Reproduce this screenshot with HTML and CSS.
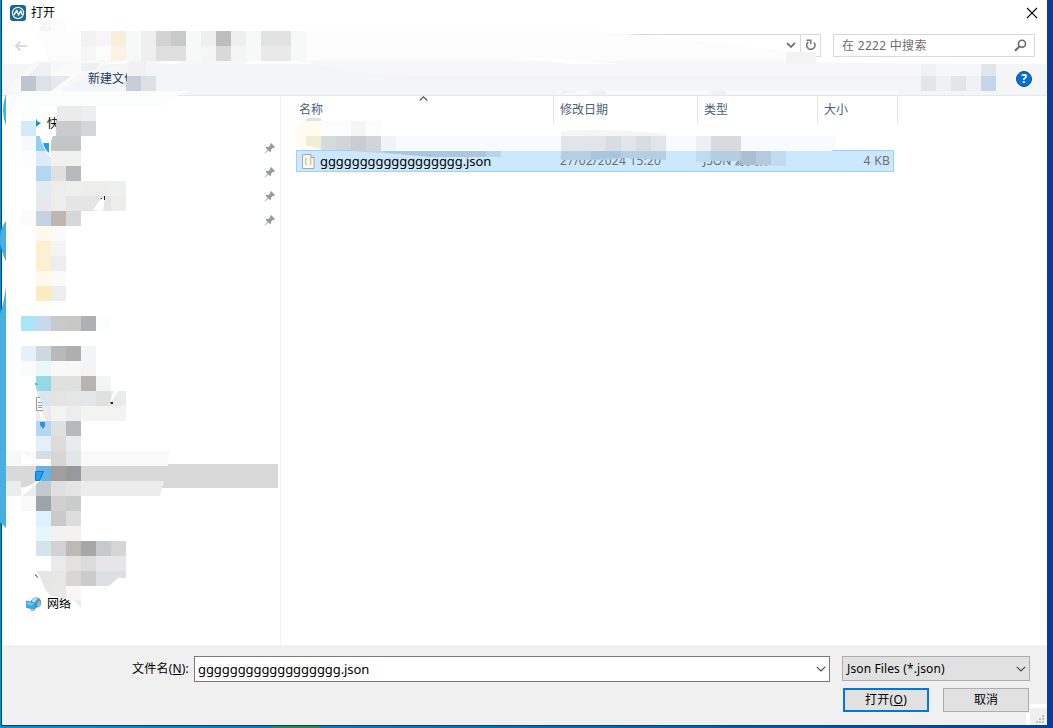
FILE: index.html
```html
<!DOCTYPE html>
<html lang="zh-CN">
<head>
<meta charset="utf-8">
<title>打开</title>
<link rel="stylesheet" href="styles.css">
</head>
<body>
<div class="dialog">
  <header class="titlebar">
    <svg class="app-icon" width="16" height="16" viewBox="0 0 16 16"><rect width="16" height="16" rx="3" fill="#14678f"/><circle cx="8" cy="8" r="5.600" fill="#1b7396" stroke="#e4f1f5" stroke-width="1.200"/><path d="M3.800 10.200 6.800 5.400 8.600 10 10.600 6l1.800 4" fill="none" stroke="#fff" stroke-width="1.500" stroke-linejoin="round"/></svg>
    <span class="title">打开</span>
    <svg class="close" width="12" height="12" viewBox="0 0 12 12"><path d="m1 1 10 10M11 1 1 11" stroke="#000" stroke-width="1.100"/></svg>
  </header>
  <nav class="navbar">
    <svg class="back" width="12" height="12" viewBox="0 0 12 12"><path d="M12 6H1M5.500 1.500 1 6l4.500 4.500" fill="none" stroke="#d4d4d4" stroke-width="1.700"/></svg>
    <div class="address">
      <svg class="addr-arrow" width="10" height="7" viewBox="0 0 10 7"><path d="m1 1 4 4 4-4" fill="none" stroke="#777" stroke-width="1.800"/></svg>
      <span class="refresh"><svg width="12" height="13" viewBox="0 0 12 13"><path d="M3.300 2.800a4.200 4.200 0 1 0 5.700.6" fill="none" stroke="#777" stroke-width="1.600"/><path d="M1.500 1.300h4.200v4" fill="none" stroke="#777" stroke-width="1.500"/></svg></span>
    </div>
    <div class="search"><span>在 2222 中搜索</span>
      <svg width="13" height="13" viewBox="0 0 13 13"><circle cx="8" cy="4.800" r="3.500" fill="none" stroke="#666" stroke-width="1.500"/><path d="M5.500 7.400 1 11.800" stroke="#666" stroke-width="1.900"/></svg>
    </div>
  </nav>
  <div class="toolbar">
    <span class="new-folder">新建文件</span>
    <span class="help">?</span>
  </div>
  <main class="main">
    <aside class="sidebar">
      <div class="side-row"><span class="side-label">快</span></div>
      <div class="side-row"><svg class="pin" width="10" height="10" viewBox="0 0 10 10"><path d="M6 0 10 4 9 5 8 4.700 6 6.700 6 8.500 5 9.300 3.200 7.200.600 10 0 9.400 2.500 6.700.500 4.800 1.500 4h2l2-2L5 1Z" fill="#909ca5"/></svg></div>
      <div class="side-row"><svg class="pin" width="10" height="10" viewBox="0 0 10 10"><path d="M6 0 10 4 9 5 8 4.700 6 6.700 6 8.500 5 9.300 3.200 7.200.600 10 0 9.400 2.500 6.700.500 4.800 1.500 4h2l2-2L5 1Z" fill="#909ca5"/></svg></div>
      <div class="side-row"><svg class="pin" width="10" height="10" viewBox="0 0 10 10"><path d="M6 0 10 4 9 5 8 4.700 6 6.700 6 8.500 5 9.300 3.200 7.200.600 10 0 9.400 2.500 6.700.500 4.800 1.500 4h2l2-2L5 1Z" fill="#909ca5"/></svg></div>
      <div class="side-row"><svg class="pin" width="10" height="10" viewBox="0 0 10 10"><path d="M6 0 10 4 9 5 8 4.700 6 6.700 6 8.500 5 9.300 3.200 7.200.600 10 0 9.400 2.500 6.700.500 4.800 1.500 4h2l2-2L5 1Z" fill="#909ca5"/></svg></div>
      <div class="side-row side-current"></div>
      <div class="side-row side-network">
        <svg class="net-icon" width="16" height="16" viewBox="0 0 16 16"><circle cx="10" cy="6.500" r="5.300" fill="#5595b8"/><path d="M6 3.500q3-3 6-1l-2 2-1 3-3-1z" fill="#b5d9e7"/><path d="m12 5 3 1-1 4-3 1z" fill="#8bbfd4"/><path d="m.500 5 9 2-.500 6.500L.500 11.500z" fill="#36a9f4" stroke="#1c83ca" stroke-width=".600"/><path d="m1 6 8 1.500-4 2L1 9z" fill="#67c6ff"/><path d="m4 13 4 1 1 1H5z" fill="#a7b7bd"/></svg>
        <span class="side-label">网络</span>
      </div>
    </aside>
    <section class="files">
      <div class="columns">
        <div class="col col-name">名称<svg class="sort" width="9" height="5" viewBox="0 0 9 5"><path d="m.700 4.500 3.800-3.700 3.800 3.700" fill="none" stroke="#555" stroke-width="1.100"/></svg></div>
        <div class="col col-date">修改日期</div>
        <div class="col col-type">类型</div>
        <div class="col col-size">大小</div>
      </div>
      <div class="file-row">
        <svg class="file-icon" width="13" height="15" viewBox="0 0 13 15"><path d="M.500.500h8.500l3 3v11h-11.500z" fill="#f7f9f9" stroke="#a4a9aa"/><path d="M9 .500v3h3" fill="#fff" stroke="#8f999d"/><path d="M5 4.500q-1.500 0-1.200 1.500.200 1.500-.800 1.500 1 0 .800 1.500-.300 1.700 1.200 1.700M7.500 4.500q1.500 0 1.200 1.500-.200 1.500.800 1.500-1 0-.800 1.500.300 1.700-1.200 1.700" fill="none" stroke="#c6c961" stroke-width="1.200"/></svg>
        <span class="file-name">gggggggggggggggggg.json</span>
        <span class="file-date">27/02/2024 15:20</span>
        <span class="file-type">JSON 源文件</span>
        <span class="file-size">4 KB</span>
      </div>
    </section>
  </main>
  <footer class="footer">
    <div class="line">
      <label class="label">文件名(<u>N</u>):</label>
      <div class="input"><span>gggggggggggggggggg.json</span><svg width="10" height="6" viewBox="0 0 10 6"><path d="m.800.800 4.200 4.200 4.200-4.200" fill="none" stroke="#444" stroke-width="1.100"/></svg></div>
      <div class="select"><span>Json Files (*.json)</span><svg width="10" height="6" viewBox="0 0 10 6"><path d="m.800.800 4.200 4.200 4.200-4.200" fill="none" stroke="#444" stroke-width="1.100"/></svg></div>
    </div>
    <div class="buttons">
      <div class="button primary">打开(<u>O</u>)</div>
      <div class="button">取消</div>
    </div>
    <svg class="grip" width="21" height="21" viewBox="0 0 21 21"><path fill="#fff" d="M4 0h17v4H4zM0 9h4v12H0z"/><path fill="#bfbfbf" d="M16 11h2v2h-2zM13 14h2v2h-2zM16 14h2v2h-2zM10 17h2v2h-2zM13 17h2v2h-2zM16 17h2v2h-2z"/></svg>
  </footer>
</div>
<svg class="smear" width="1053" height="100" viewBox="0 0 1053 100">
  <path fill="#fcfcfc" d="M52 20q-15 2-13 16l10 25h737V51L650 36 626 34 590 31H66V20z"/>
  <path fill="#f6f6f4" d="M51 20q-12 2-12 11h12z"/>
  <path fill="#f8f8f9" d="M36 61 21 74 6 92h55l30-18 20-13z"/>
  <path fill="#f7f7f7" d="M130 61h656l64 2 137 1 9 12H380l-63-12-50-5-24 5-100 6-32 6H90z"/>
  <path fill="#f4f5f8" d="M243 64h74q40 10 90 12h588v15H60l30-15 40-12z"/>
  <path fill="#fff" d="M160 59h25l-9 5h-15zM243 64q13-7 26-7l40 6zM510 57q66 2 110 7h-48z"/>
  <path fill="#fafafa" d="M130 60q-20 1-49 14-15 7-20 17H6q14-1 35-10 25-20 50-21z"/>
</svg>
<svg class="mosaic" width="1053" height="728" viewBox="0 0 1053 728">
  <!-- desktop edge strokes -->
  <g fill="#47afe1">
    <path d="M6 94Q0 110 6 126zM6 221Q-1 229 0 243q2 11 6 18z"/>
    <path d="M6 286Q4 303 0 314v208l6 6z"/>
  </g>
  <g transform="translate(6 1) scale(15)" shape-rendering="crispEdges">
    <path fill="#f2f2f2" d="M5 2h1v1h-1z"/><path fill="#f6f6f6" d="M6 2h1v1h-1zM5 3h1v1h-1z"/>
    <path fill="#f8efd8" d="M7 2h1v1h-1z"/><path fill="#faf3e3" d="M7 3h1v1h-1z"/>
    <path fill="#f7f8f8" d="M8 2h1v2h-1zM12 2h1v2h-1zM16 2h1v2h-1zM19 2h1v2h-1z"/>
    <path fill="#efefef" d="M9 2h1v2h-1zM13 2h1v1h-1zM15 2h1v1h-1z"/>
    <path fill="#d3d3d3" d="M10 2h1v1h-1z"/><path fill="#c9c9c9" d="M11 2h1v1h-1z"/>
    <path fill="#dfdfdf" d="M10 3h2v1h-2z"/><path fill="#bdbdbd" d="M14 2h1v1h-1z"/><path fill="#d9d9d9" d="M14 3h1v1h-1z"/>
    <path fill="#f5f5f5" d="M13 3h1v1h-1zM15 3h1v1h-1z"/><path fill="#e2e2e2" d="M17 2h2v1h-2z"/><path fill="#e9e9e9" d="M17 3h2v1h-2z"/>
    <path fill="#f3f3f3" d="M52 3.400h2v.8h-2z"/>
    <path fill="#eff0f3" d="M2.300 4.100h.7v.9h-1.600zM5 4.100h1.300l-.3.500-1 .1z"/>
    <path fill="#bcc5d0" d="M1 5h1v1h-1z"/><path fill="#dce2e7" d="M2 5h1v1h-1z"/><path fill="#e5e9ed" d="M3 5h1.300l-1.300 1z"/>
    <path fill="#f1f1f4" d="M8.200 4h1.100v1h-1.250z"/><path fill="#c7ced9" d="M8.050 5h.95v1h-1z"/><path fill="#dce1e6" d="M9 5h1v1h-1z"/>
    <path fill="#eff1f4" d="M61 4.200h1v.8h-1zM64 5h1v1h-1zM62 5h1v1h-1z"/><path fill="#f5f7fa" d="M62 4.200h3v.8h-3z"/>
    <path fill="#e4e5e7" d="M61 5h1v1h-1zM63 5h1v1h-1z"/><path fill="#e1e6ea" d="M65 4.200h1v.8h-1z"/><path fill="#c4d6e8" d="M65 5h1v1h-1z"/>
  </g>
  <path fill="#fbfcfc" d="M6 106V96q14-5 35-5h148q-16 5-28 15z"/>
  <path fill="#f9fafa" d="M555 91h342v3H565z"/>
  <path fill="#f0f0f1" d="M591 91h15v4h-15zM711 91h15v4h-15zM561 91h15v2h-15z"/>

  <!-- sidebar cells -->
  <g transform="translate(6 1) scale(15)" shape-rendering="crispEdges">
    <path fill="#fcfdff" d="M1 7h1v1h-1zM1 10h1v1h-1zM6 21h1v1h-1z"/>
    <path fill="#ebebeb" d="M3.400 7h1.600v1h-1.600z"/><path fill="#eee" d="M5 7h1v1h-1z"/>
    <path fill="#d3eaf9" d="M1 8h1v1h-1z"/><path fill="#cbcbcb" d="M3.350 8h1.650v1h-1.650z"/><path fill="#d4d5d7" d="M5 8h1v1h-1z"/>
    <path fill="#f4faff" d="M1 9h1v1h-1z"/><path fill="#90cffa" d="M2 9h1v1h-1z"/><path fill="#c4c5c6" d="M3 9h2v1h-2z"/>
    <path fill="#dcebf6" d="M2 10h1v1h-1z"/><path fill="#f1f1f0" d="M3 10h2v1h-2z"/>
    <path fill="#b3d6f1" d="M2 11h1v1h-1zM2 28h1v1h-1z"/><path fill="#e0e0e0" d="M3 11h1v1h-1zM3 28h1v1h-1z"/><path fill="#b7baba" d="M4 11h1v1h-1zM4 28h1v1h-1z"/>
    <path fill="#e2ebf0" d="M2 12h1v1h-1z"/><path fill="#ededec" d="M3 12h1v2h-1zM5 12h2v1h-2zM7 13h1v1h-1z"/><path fill="#eef0f0" d="M4 12h1v1h-1zM7 12h1v1h-1z"/>
    <path fill="#e8e8ea" d="M2 13h1v1h-1z"/><path fill="#e5e5e5" d="M4 13h3v1h-3z"/>
    <path fill="#fbfbfb" d="M1 14h1v1h-1z"/><path fill="#c3d3e1" d="M2 14h1v1h-1z"/><path fill="#bdb6b3" d="M3 14h1v1h-1z"/><path fill="#d5d8db" d="M4 14h1v1h-1z"/>
    <path fill="#fff9ec" d="M2 15h1v1h-1zM2 18h1v1h-1z"/><path fill="#fafafb" d="M3 15h1v1h-1zM3 18h1v1h-1z"/>
    <path fill="#fcf0d0" d="M2 16h1v2h-1z"/><path fill="#f4f4f4" d="M3 16h1v1h-1z"/><path fill="#ededed" d="M3 17h1v1h-1zM3 19h1v1h-1z"/><path fill="#fbecc0" d="M2 19h1v1h-1z"/>
    <path fill="#a8e5f7" d="M1 21h1v1h-1z"/><path fill="#c8d9eb" d="M2 21h1v1h-1z"/><path fill="#c8c9cb" d="M3 21h1v1h-1z"/><path fill="#cac8c5" d="M4 21h1v1h-1z"/><path fill="#afb0b1" d="M5 21h1v1h-1z"/>
    <path fill="#e5f0f7" d="M1 23h1v1h-1z"/><path fill="#cdd9df" d="M2 23h1v1h-1z"/><path fill="#b8b9ba" d="M3 23h1v1h-1z"/><path fill="#afafaf" d="M4 23h1v1h-1z"/><path fill="#f3f4f6" d="M5 23h1v1h-1zM6 25h1v1h-1z"/>
    <path fill="#fafbfd" d="M1 24h1v1h-1z"/><path fill="#e8f8f8" d="M2 24h1v1h-1z"/><path fill="#f8f8f8" d="M3 24h2v1h-2zM0 30h1v1h-1z"/><path fill="#f4f4f4" d="M5 24h1v1h-1z"/>
    <path fill="#96d9e6" d="M2 25h1v1h-1z"/><path fill="#e0e0df" d="M3 25h2v1h-2zM6 26h1v1h-1z"/><path fill="#b5b4b3" d="M5 25h1v1h-1z"/>
    <path fill="#dbe5ec" d="M2 26h1v1h-1z"/><path fill="#e6e4e2" d="M3 26h1v1h-1z"/><path fill="#e5e6e7" d="M4 26h2v1h-2z"/><path fill="#e9ebed" d="M7 26h1v1h-1z"/>
    <path fill="#ebebeb" d="M2 27h1v1h-1z"/><path fill="#f3f4f2" d="M3 27h1v1h-1zM5 27h3v1h-3z"/><path fill="#ededed" d="M4 27h1v1h-1z"/>
    <path fill="#e6eef9" d="M2 29h1v1h-1z"/><path fill="#dddad7" d="M3 29h1v1h-1z"/><path fill="#e9ebec" d="M4 29h1v1h-1z"/>
  </g>
  <path fill="#f9f9f9" d="M21 451h150l-3 9v6H21z"/>
  <path fill="#fff" d="M22 451q4 9 26 8l-1 5H21z"/>
  <path fill="#ececec" d="M6 481h158l-4 15H6z"/>
  <path fill="#d9d9d9" d="M6 466h162v15H6z"/>
  <path fill="#d9d9d9" d="M21 481h19l-15 6h-4z"/>
  <g transform="translate(6 1) scale(15)" shape-rendering="crispEdges">
    <path fill="#d5dfe2" d="M2 30h1v.55h-1z"/><path fill="#d8d6d3" d="M3 30h1v1h-1z"/><path fill="#e2e6e8" d="M4 30h1v1h-1z"/>
    <path fill="#68b3e3" d="M2 31h1v1h-1z"/><path fill="#a19e9b" d="M3 31h1v1h-1z"/><path fill="#98999b" d="M4 31h1v1h-1z"/>
    <path fill="#c4c9cd" d="M2 32h1v1h-1z"/><path fill="#e0e0e0" d="M3 32h1v1h-1z"/><path fill="#e5e5e5" d="M4 32h1v1h-1z"/>
    <path fill="#f9f9f9" d="M1 33h1v1h-1z"/><path fill="#9ea3ac" d="M2 33h1v1h-1z"/><path fill="#d1cfcf" d="M3 33h1v1h-1z"/><path fill="#c9cccb" d="M4 33h1v1h-1z"/>
    <path fill="#ddf1ff" d="M2 34h1v1h-1z"/><path fill="#cacaca" d="M3 34h1v1h-1z"/><path fill="#ddd" d="M4 34h1v1h-1z"/>
    <path fill="#e6f5fe" d="M2 35h1v1h-1z"/><path fill="#f2f2f2" d="M3 35h2v1h-2z"/>
    <path fill="#d5e4e8" d="M2 36h1v1h-1z"/><path fill="#d2d2d2" d="M3 36h1v1h-1z"/><path fill="#beb9b5" d="M4 36h1v1h-1z"/><path fill="#a7a7a7" d="M5 36h1v1h-1z"/><path fill="#c5cacd" d="M6 36h1v1h-1z"/><path fill="#d5d5d5" d="M7 36h1v1h-1z"/>
    <path fill="#eaeaea" d="M3 37h1v1h-1z"/><path fill="#e2e1df" d="M4 37h1v1h-1z"/><path fill="#dbdbdb" d="M5 37h1v1h-1z"/><path fill="#e6e6e8" d="M6 37h2v1h-2z"/>
    <path fill="#e7e7e5" d="M3 38h1v1h-1z"/><path fill="#d8d7d4" d="M4 38h1v1h-1z"/><path fill="#cbcbcb" d="M5 38h1v1h-1z"/>
  </g>
  <path fill="#dedfe2" d="M96 571h30v7h-8l-9 8H96z"/>
  <path fill="#e6e6e6" d="M36 571h15v25q-8-7-11-20z"/>
  <path fill="#e8e8e5" d="M51 586h15v13l-15-3z"/>
  <path fill="#f7f7f7" d="M66 586h15v18l-15-5z"/><path fill="#e9eaeb" d="m74 600 7 1v7z"/>
  <!-- unmasked slivers -->
  <path fill="#fff" d="M36 119q5 30 15 39V144q0-8 6-13l-6 1q-10-3-15-13zM93 210l6-9 6-3-2 13zM33 373l8 38 5 10h-5l-6-32zM118 391h-4l-6 16zM48 459l-1 7-6 8 6-8q-6-6-14-7zM41 480 21 497v-9q8 0 15-7z"/>
  <path fill="#1d91d8" d="m36 118 1 3 4 2-5 4z"/><path fill="#1e9dfb" d="M43 143h6v10q-4-3-6-10z"/>
  <path fill="#1e9dfb" stroke="#1378c0" d="M35.500 471.500h8l-4 9h-4z"/>
  <path fill="#338fe3" d="M40 422h5v4l-2 3-3-4z"/>
  <path fill="#fafafa" stroke="#999" d="M43 410.500h-6.500v-13H40"/><path stroke="#77a9d1" d="M38 402.500h4"/><path stroke="#999" d="M38 405.500h4M38 407.500h4"/>
  <path fill="#45bdb7" d="M35 383h2l1 2h-3z"/><path fill="#222" d="m35 574 4 4-2-1-2-2zM110 402h3v2h-2zM100 199h2v-1zM104 196h1v4h-1z"/>

  <!-- file list smear -->
  <path fill="#fcfcfd" d="M304 121q-9 5-10 16 2 9 27 13h60v-29z"/>
  <path fill="#fffbf1" d="M306 121h15v28q-26-1-27-12 1-13 12-16z"/>
  <path fill="#dde2e8" d="M306 119q4-2 15-1v3h-15z"/><path fill="#f3ecd7" d="M306 136h15v13l-15-4z"/>
  <path fill="#f7fbff" d="M396 136h440q2 8-4 15H381z"/>
  <path fill="#f5f5f5" d="M561 131q50-3 105 3v2H561zM351 121h15v15h-15z"/>
  <path fill="#d5dade" d="M321 136h15v14h-15z"/><path fill="#d2d5d8" d="M336 136h15v14h-15zM366 136h15v15h-15z"/><path fill="#c9ccd0" d="M351 136h15v15h-15z"/><path fill="#eff3f9" d="M381 136h15v15h-15z"/>
  <path fill="#aac7dd" d="M365 151h121v6H430z"/><path fill="#bad3e7" d="M350 151h30l15 3zM486 151h15v6h-15z"/>
  <path fill="#e1e5e9" d="M561 136h105v15H561z"/><path fill="#d8dde2" d="M606 136h15v15h-15zM636 136h15v15h-15z"/>
  <path fill="#b5cee2" d="M561 151h105v9l-20-1-20-1-20 2h-45z"/><path fill="#aac5df" d="M606 151h15v7h-15zM591 151h15v8h-15z"/>
  <path fill="#edf0f3" d="M696 136h15v15h-15z"/><path fill="#d8dadd" d="M711 136h30v15h-30z"/>
  <path fill="#c0dbef" d="M696 151h15v11h-15z"/><path fill="#b4cde1" d="M711 151h30v10h-30z"/>
  <path fill="#a9c0d3" d="M741 151h15v14h-15z"/><path fill="#b3cbe0" d="M756 151h15v14h-15z"/><path fill="#c1daed" d="M771 151h15v15h-15z"/>
</svg>
</body>
</html>
```

FILE: styles.css
```css
* { box-sizing: border-box; }

body {
  position: relative;
  width: 1053px;
  height: 728px;
  margin: 0;
  padding-left: 1px;
  overflow: hidden;
  background:
    linear-gradient(#29875c, #29875c) 272px 726px / 48px 2px no-repeat,
    linear-gradient(90deg, #008fd3, #0472b5 45%, #0041a0) 0 726px / 100% 2px no-repeat,
    linear-gradient(#0a3aa2, #073ba5) 1047px 0 / 6px 100% no-repeat,
    #008fda;
  color: #000;
  font: 12px/16px "Noto Sans", "Noto Sans CJK SC", sans-serif;
}

svg { display: block; flex: none; }

.dialog {
  display: flex;
  flex-direction: column;
  width: 1047px;
  height: 726px;
  border: solid #0b4268;
  border-width: 0 1px 1px;
  background: #fff;
}

.titlebar {
  display: flex;
  align-items: center;
  height: 26px;
  padding: 0 9px 0 8px;
}
.title { margin-left: 5px; }
.close { margin-left: auto; }

.navbar {
  display: flex;
  height: 38px;
  padding: 8px 12px 0 13px;
}
.back { margin-top: 6px; }
.address {
  display: flex;
  align-items: center;
  width: 195px;
  height: 23px;
  margin-left: 599px;
  border: 1px solid #d9d9d9;
  border-left: 0;
}
.addr-arrow { margin-left: auto; }
.refresh {
  display: flex;
  align-items: center;
  justify-content: center;
  width: 20px;
  height: 21px;
  margin-left: 4px;
  border-left: 1px solid #d9d9d9;
}
.search {
  display: flex;
  align-items: center;
  justify-content: space-between;
  width: 202px;
  height: 23px;
  margin-left: 12px;
  padding: 0 7px 0 8px;
  border: 1px solid #d9d9d9;
  color: #6d6d6d;
  letter-spacing: .3px;
}

.toolbar {
  display: flex;
  align-items: center;
  justify-content: space-between;
  height: 32px;
  padding: 0 15px 1px 86px;
  border-bottom: 1px solid #e5e7e9;
  background: #f4f5f7;
}
.new-folder {
  position: relative;
  z-index: 1;
  color: #1e395b;
  white-space: nowrap;
}
.help {
  width: 16px;
  height: 16px;
  border: 1px solid #084f99;
  border-radius: 50%;
  background: #0870d0;
  color: #fff;
  font-size: 12px;
  font-weight: 700;
  line-height: 14px;
  text-align: center;
}

.main { display: flex; height: 549px; }
.sidebar {
  width: 279px;
  padding-top: 16px;
  border-right: 1px solid #f2f2f2;
}
.side-row {
  display: flex;
  align-items: center;
  height: 24px;
}
.side-label { margin-left: 45px; }
.pin { margin-left: 263px; }
.side-current {
  width: 276px;
  margin-top: 232px;
  background: #d9d9d9;
}
.side-network { margin-top: 104px; }
.net-icon { margin-left: 24px; }
.side-network .side-label { margin-left: 5px; }

.files { flex: 1; padding-left: 15px; }
.columns {
  display: flex;
  height: 28px;
  color: #4c607a;
}
.col {
  position: relative;
  padding: 6px 0 0 6px;
  border-right: 1px solid #e5e5e5;
}
.col-name { width: 258px; padding-left: 3px; }
.col-date { width: 144px; }
.col-type { width: 120px; }
.col-size { width: 80px; }
.sort { position: absolute; top: 0; left: 123px; }

.file-row {
  display: flex;
  align-items: center;
  width: 598px;
  height: 22px;
  margin-top: 26px;
  padding: 0 3px 0 5px;
  border: 1px solid #99d1ff;
  background: #cce8ff;
  color: #6d6d6d;
}
.file-name {
  width: 240px;
  margin-left: 5px;
  color: #000;
  font-size: 13px;
  letter-spacing: -.07px;
}
.file-date { width: 143px; letter-spacing: .22px; }
.file-type { white-space: nowrap; }
.file-size { margin-left: auto; letter-spacing: .3px; }

.footer {
  position: relative;
  flex: 1;
  padding-top: 11px;
  background: #f0f0f0;
}
.line { display: flex; align-items: flex-start; }
.label {
  width: 192px;
  padding: 5px 5px 0 0;
  letter-spacing: .2px;
  text-align: right;
}
.input, .select {
  display: flex;
  align-items: center;
  justify-content: space-between;
}
.input {
  width: 636px;
  height: 26px;
  padding: 1px 3px;
  border: 1px solid #7a7a7a;
  background: #fff;
  font-size: 13px;
  letter-spacing: -.07px;
}
.select {
  width: 188px;
  height: 25px;
  margin-left: 12px;
  padding: 0 3px 0 4px;
  border: 1px solid #adadad;
  background: #e1e1e1;
  letter-spacing: .12px;
}
.buttons {
  display: flex;
  justify-content: flex-end;
  gap: 14px;
  margin-top: 6px;
  padding-right: 18px;
}
.button {
  width: 86px;
  height: 24px;
  border: 1px solid #adadad;
  background: #e1e1e1;
  line-height: 22px;
  text-align: center;
}
.primary { border: 2px solid #0078d7; line-height: 20px; letter-spacing: .3px; }
.grip { position: absolute; right: 0; bottom: 0; }

/* pixelated censoring strokes above the dialog */
.smear, .mosaic { position: absolute; top: 0; left: 0; pointer-events: none; }
.mosaic { z-index: 2; }
```
